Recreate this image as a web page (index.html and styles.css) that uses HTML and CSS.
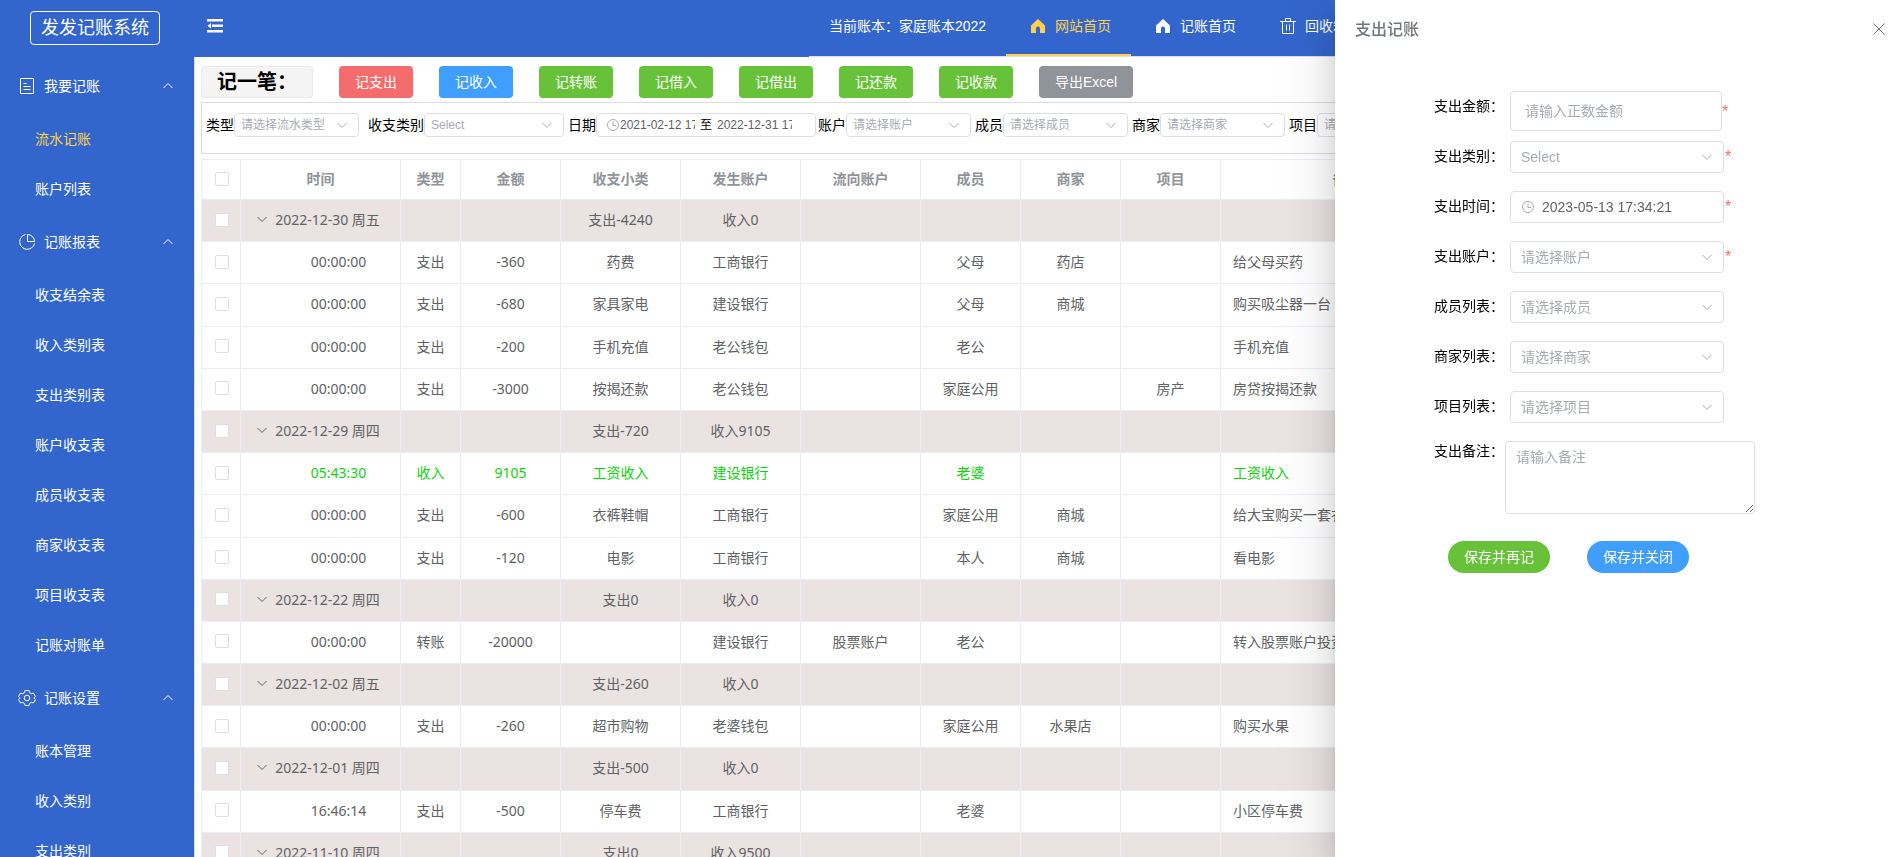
FILE: index.html
```
<!DOCTYPE html>
<html lang="zh-CN">

<head>
    <meta charset="UTF-8">
    <meta name="viewport" content="width=device-width, initial-scale=1.0">
    <title>发发记账系统</title>
    <link rel="stylesheet" href="styles.css">
</head>

<body>
    <svg class="symbols" aria-hidden="true">
        <symbol id="down" viewBox="0 0 14 14">
            <path d="M2.500 5l4.500 4.500 4.500-4.500" fill="none" stroke="currentColor" />
        </symbol>
        <symbol id="up" viewBox="0 0 14 14">
            <path d="M2.500 9l4.500-4.500 4.500 4.500" fill="none" stroke="currentColor" />
        </symbol>
        <symbol id="home" viewBox="0 0 18 18">
            <path d="M9 2L2 8.500V16h5v-4.500a2 2 0 0 1 4 0V16h5V8.500z" fill="currentColor" />
        </symbol>
        <symbol id="clock" viewBox="0 0 14 14">
            <circle cx="7" cy="7" r="5.500" fill="none" stroke="currentColor" />
            <path d="M7 3.500V7.500h3" fill="none" stroke="currentColor" />
        </symbol>
    </svg>
    <div class="layout">
        <aside class="sidebar">
            <div class="logo">发发记账系统</div>
            <nav>
                <button type="button" class="group">
                    <svg class="icon" viewBox="0 0 18 18" fill="none" stroke="currentColor">
                        <path d="M2.500 1.500h13v15h-13zM5.500 6.500h3M5.500 9.500h7M5.500 12.500h7" />
                    </svg>
                    <span>我要记账</span>
                    <svg class="arrow"><use href="#up" /></svg>
                </button>
                <a href="#" class="active">流水记账</a>
                <a href="#">账户列表</a>
                <button type="button" class="group">
                    <svg class="icon" viewBox="0 0 18 18" fill="none" stroke="currentColor">
                        <path d="M7.500 1.500A7.500 7.500 0 1 0 16.500 10.500M9.500 1.500V8.500H16.500A7 7 0 0 0 9.500 1.500z" />
                    </svg>
                    <span>记账报表</span>
                    <svg class="arrow"><use href="#up" /></svg>
                </button>
                <a href="#">收支结余表</a>
                <a href="#">收入类别表</a>
                <a href="#">支出类别表</a>
                <a href="#">账户收支表</a>
                <a href="#">成员收支表</a>
                <a href="#">商家收支表</a>
                <a href="#">项目收支表</a>
                <a href="#">记账对账单</a>
                <button type="button" class="group">
                    <svg class="icon" viewBox="0 0 18 18" fill="none" stroke="currentColor">
                        <path d="M7 1.500h4l.6 2.200 1.700 1 2.200-.6 2 3.400-1.600 1.500 1.600 1.600-2 3.400-2.200-.6-1.700 1-.6 2.100H7l-.6-2.100-1.700-1-2.200.6-2-3.400L2.100 9 .5 7.500l2-3.400 2.200.6 1.700-1z" />
                        <circle cx="9" cy="9" r="2.800" />
                    </svg>
                    <span>记账设置</span>
                    <svg class="arrow"><use href="#up" /></svg>
                </button>
                <a href="#">账本管理</a>
                <a href="#">收入类别</a>
                <a href="#">支出类别</a>
            </nav>
        </aside>
        <div class="content">
            <header>
                <button type="button" class="fold" aria-label="折叠菜单">
                    <svg viewBox="0 0 16 14" fill="currentColor">
                        <path d="M0 0h16v2.500H0zM5 5.500h11v2.500H5zM0 11h16v2.500H0zM4 4v5.500L0.500 6.750z" />
                    </svg>
                </button>
                <nav class="topnav">
                    <span class="book">当前账本：家庭账本2022</span>
                    <a href="#" class="current"><svg><use href="#home" /></svg>网站首页</a>
                    <a href="#"><svg><use href="#home" /></svg>记账首页</a>
                    <a href="#"><svg viewBox="0 0 18 18" fill="none" stroke="currentColor">
                            <path d="M1 4.500h16M6.500 4V1.500h5V4M3.500 4.500v12h11v-12M7.500 7.500v6M10.500 7.500v6" />
                        </svg>回收箱</a>
                </nav>
            </header>
            <main>
                <div class="actions">
                    <h1>记一笔：</h1>
                    <button type="button" class="btn danger">记支出</button>
                    <button type="button" class="btn primary">记收入</button>
                    <button type="button" class="btn success">记转账</button>
                    <button type="button" class="btn success">记借入</button>
                    <button type="button" class="btn success">记借出</button>
                    <button type="button" class="btn success">记还款</button>
                    <button type="button" class="btn success">记收款</button>
                    <button type="button" class="btn info">导出Excel</button>
                </div>
                <form class="filter">
                    <div class="item type">
                        <label for="f-type">类型</label>
                        <div class="select">
                            <select id="f-type"><option>请选择流水类型</option></select>
                            <svg><use href="#down" /></svg>
                        </div>
                    </div>
                    <div class="item category">
                        <label for="f-category">收支类别</label>
                        <div class="select">
                            <select id="f-category"><option>Select</option></select>
                            <svg><use href="#down" /></svg>
                        </div>
                    </div>
                    <div class="item period">
                        <label for="f-start">日期</label>
                        <div class="range">
                            <svg><use href="#clock" /></svg>
                            <input type="text" id="f-start" value="2021-02-12 17:34:21">
                            <span>至</span>
                            <input type="text" aria-label="结束日期" value="2022-12-31 17:34:21">
                        </div>
                    </div>
                    <div class="item">
                        <label for="f-account">账户</label>
                        <div class="select">
                            <select id="f-account"><option>请选择账户</option></select>
                            <svg><use href="#down" /></svg>
                        </div>
                    </div>
                    <div class="item">
                        <label for="f-member">成员</label>
                        <div class="select">
                            <select id="f-member"><option>请选择成员</option></select>
                            <svg><use href="#down" /></svg>
                        </div>
                    </div>
                    <div class="item">
                        <label for="f-shop">商家</label>
                        <div class="select">
                            <select id="f-shop"><option>请选择商家</option></select>
                            <svg><use href="#down" /></svg>
                        </div>
                    </div>
                    <div class="item">
                        <label for="f-project">项目</label>
                        <div class="select">
                            <select id="f-project"><option>请选择项目</option></select>
                            <svg><use href="#down" /></svg>
                        </div>
                    </div>
                </form>
                <table>
                    <colgroup>
                        <col class="w-check">
                        <col class="w-time">
                        <col class="w-type">
                        <col class="w-small">
                        <col class="w-large">
                        <col class="w-large">
                        <col class="w-large">
                        <col class="w-small">
                        <col class="w-small">
                        <col class="w-small">
                        <col class="w-remark">
                        <col>
                    </colgroup>
                    <thead>
                        <tr>
                            <th><input type="checkbox" aria-label="全选"></th>
                            <th>时间</th>
                            <th>类型</th>
                            <th>金额</th>
                            <th>收支小类</th>
                            <th>发生账户</th>
                            <th>流向账户</th>
                            <th>成员</th>
                            <th>商家</th>
                            <th>项目</th>
                            <th>备注</th>
                            <th></th>
                        </tr>
                    </thead>
                    <tbody></tbody>
                </table>
            </main>
        </div>
    </div>
    <div class="drawer" role="dialog" aria-labelledby="drawer-title">
        <div class="drawer-head">
            <h2 id="drawer-title">支出记账</h2>
            <button type="button" aria-label="关闭">
                <svg viewBox="0 0 12 12" fill="none" stroke="currentColor">
                    <path d="M0.500 0.500l11 11M11.500 0.500l-11 11" />
                </svg>
            </button>
        </div>
        <form class="bill">
            <div class="row amount">
                <label for="b-amount">支出金额：</label>
                <input type="text" id="b-amount" placeholder="请输入正数金额">
                <span class="star">*</span>
            </div>
            <div class="row">
                <label for="b-category">支出类别：</label>
                <div class="select">
                    <select id="b-category"><option>Select</option></select>
                    <svg><use href="#down" /></svg>
                </div>
                <span class="star">*</span>
            </div>
            <div class="row">
                <label for="b-time">支出时间：</label>
                <div class="time">
                    <svg><use href="#clock" /></svg>
                    <input type="text" id="b-time" value="2023-05-13 17:34:21">
                </div>
                <span class="star">*</span>
            </div>
            <div class="row">
                <label for="b-account">支出账户：</label>
                <div class="select">
                    <select id="b-account"><option>请选择账户</option></select>
                    <svg><use href="#down" /></svg>
                </div>
                <span class="star">*</span>
            </div>
            <div class="row">
                <label for="b-member">成员列表：</label>
                <div class="select">
                    <select id="b-member"><option>请选择成员</option></select>
                    <svg><use href="#down" /></svg>
                </div>
            </div>
            <div class="row">
                <label for="b-shop">商家列表：</label>
                <div class="select">
                    <select id="b-shop"><option>请选择商家</option></select>
                    <svg><use href="#down" /></svg>
                </div>
            </div>
            <div class="row">
                <label for="b-project">项目列表：</label>
                <div class="select">
                    <select id="b-project"><option>请选择项目</option></select>
                    <svg><use href="#down" /></svg>
                </div>
            </div>
            <div class="row remark">
                <label for="b-remark">支出备注：</label>
                <textarea id="b-remark" placeholder="请输入备注"></textarea>
            </div>
            <div class="submit">
                <button type="button" class="btn success round">保存并再记</button>
                <button type="button" class="btn primary round">保存并关闭</button>
            </div>
        </form>
    </div>
    <script src="table.js"></script>
</body>

</html>
```

FILE: styles.css
```
* {
    box-sizing: border-box;
}

body {
    margin: 0;
    height: 100vh;
    overflow: hidden;
    background-color: #fff;
    color: #000;
    font-family: "Liberation Sans", "Noto Sans CJK SC", sans-serif;
    font-size: 14px;
}

button,
input,
select,
textarea {
    margin: 0;
    font-family: inherit;
    font-size: inherit;
}

button {
    cursor: pointer;
}

a {
    text-decoration: none;
}

svg {
    flex-shrink: 0;
}

.symbols {
    display: none;
}

.layout {
    display: flex;
    height: 100vh;
}

/* 左侧菜单 */
.sidebar {
    flex: 0 0 194px;
    overflow: hidden;
    background-color: #3366cc;
    color: #fff;
}

.logo {
    width: 130px;
    height: 34px;
    margin: 11px 0 13px 30px;
    border: 1px solid #fff;
    border-radius: 4px;
    font-size: 18px;
    line-height: 32px;
    text-align: center;
}

.sidebar a {
    display: block;
    height: 50px;
    padding-left: 35px;
    line-height: 50px;
    color: #fff;
}

.sidebar .active {
    color: #ffd04b;
}

.group {
    display: flex;
    align-items: center;
    width: 100%;
    height: 56px;
    padding: 0 19px 0 18px;
    border: none;
    background: none;
    color: #fff;
}

.group span {
    padding-bottom: 2px;
}

.icon {
    width: 18px;
    height: 18px;
    margin-right: 8px;
}

.arrow {
    width: 14px;
    height: 14px;
    margin-left: auto;
}

/* 顶部 */
.content {
    display: flex;
    flex-direction: column;
    flex: 1;
    min-width: 0;
}

header {
    display: grid;
    grid-template-columns: 615px 1fr;
    flex: 0 0 57px;
    background-color: #3366cc;
    color: #fff;
}

.fold {
    width: 42px;
    height: 52px;
    padding: 0 13px;
    border: none;
    background: none;
    color: #fff;
}

.fold svg {
    display: block;
    width: 16px;
    height: 14px;
}

.topnav {
    display: flex;
    border-bottom: 1px solid #dcdfe6;
    line-height: 52px;
    white-space: nowrap;
}

.topnav .book {
    width: 197px;
    padding-left: 20px;
}

.topnav a {
    display: flex;
    align-items: center;
    height: 56px;
    padding: 0 20px 2px;
    border-bottom: 2px solid transparent;
    color: #fff;
}

.topnav .current {
    border-bottom-color: #ffd04b;
    color: #ffd04b;
}

.topnav svg {
    width: 18px;
    height: 18px;
    margin: 0 8px 0 3px;
}

/* 记账按钮 */
main {
    flex: 1;
    min-height: 0;
    padding: 9px 6px 0;
    border-left: 1px solid #dcdfe6;
    overflow: hidden;
}

.actions {
    display: flex;
    gap: 26px;
}

h1 {
    width: 112px;
    height: 32px;
    margin: 0;
    padding-left: 15px;
    border: 1px solid #e9e9eb;
    border-radius: 4px;
    background-color: #f4f4f5;
    font-size: 20px;
    line-height: 30px;
    white-space: nowrap;
}

.btn {
    height: 32px;
    padding: 0 16px 2px;
    border: none;
    border-radius: 4px;
    color: #fff;
    white-space: nowrap;
}

.danger {
    background-color: #f56c6c;
}

.primary {
    background-color: #409eff;
}

.success {
    background-color: #67c23a;
}

.info {
    background-color: #909399;
}

.round {
    border-radius: 16px;
}

/* 查询条件 */
.filter {
    display: flex;
    align-items: flex-start;
    gap: 4px;
    height: 52px;
    margin: 4px 0 5px;
    padding: 10px 4px;
    border: 1px solid #dcdcdc;
    overflow: hidden;
}

.item {
    display: flex;
    flex-shrink: 0;
    height: 24px;
    line-height: 24px;
}

.item .select {
    width: 125px;
}

.item.type {
    margin-right: 5px;
}

.item.category .select {
    width: 140px;
}

.item.period {
    margin-right: -2px;
}

.select {
    position: relative;
}

select {
    appearance: none;
    width: 100%;
    height: 32px;
    padding: 0 30px 0 10px;
    border: 1px solid #dcdfe6;
    border-radius: 4px;
    background-color: #fff;
    color: #a8abb2;
}

/* 下拉箭头 */
.select svg {
    position: absolute;
    top: 50%;
    right: 10px;
    width: 14px;
    height: 14px;
    margin-top: -7px;
    color: #a8abb2;
    pointer-events: none;
}

.filter select {
    display: block;
    height: 24px;
    padding-left: 6px;
    font-size: 12px;
}

.range {
    display: flex;
    align-items: center;
    width: 220px;
    height: 24px;
    padding-left: 9px;
    border: 1px solid #dcdfe6;
    border-radius: 4px;
    font-size: 12px;
}

.range svg,
.time svg {
    width: 14px;
    height: 14px;
    color: #a8abb2;
}

.range input {
    width: 75px;
    padding: 0;
    border: none;
    color: #606266;
}

.range span {
    width: 22px;
    text-align: center;
}

/* 流水表格 */
table {
    width: 100%;
    table-layout: fixed;
    border-collapse: collapse;
    color: #606266;
    font-family: "Noto Sans", "Noto Sans CJK SC", sans-serif;
}

th,
td {
    padding: 7px 0 9px;
    border: 1px solid #ebeef5;
    line-height: 1.8;
    text-align: center;
    white-space: nowrap;
    overflow: hidden;
}

th {
    color: #909399;
    line-height: 23px;
}

.w-check {
    width: 39px;
}

.w-time {
    width: 160px;
}

.w-type {
    width: 60px;
}

.w-small {
    width: 100px;
}

.w-large {
    width: 120px;
}

.w-remark {
    width: 252px;
}

table input {
    appearance: none;
    display: block;
    width: 14px;
    height: 14px;
    margin: 0 0 0 13px;
    border: 1px solid #dcdfe6;
    border-radius: 2px;
    background-color: #fff;
}

.day {
    background-color: #ebe2e2;
}

.income {
    color: #13ce13;
}

.note {
    padding-left: 12px;
    text-align: left;
}

.clock {
    padding-left: 36px;
}

.date {
    padding-right: 6px;
}

.toggle {
    width: 20px;
    height: 14px;
    padding: 0 6px 0 0;
    border: none;
    background: none;
    color: #606266;
    vertical-align: -1px;
}

.toggle svg {
    display: block;
    width: 14px;
    height: 14px;
}

/* 右侧抽屉 */
.drawer {
    position: fixed;
    top: 0;
    right: 0;
    bottom: 0;
    width: 555px;
    background-color: #fff;
    box-shadow: 0 16px 48px 16px rgba(0, 0, 0, .08), 0 12px 32px rgba(0, 0, 0, .12), 0 8px 16px -8px rgba(0, 0, 0, .16);
}

.drawer-head {
    display: flex;
    align-items: center;
    justify-content: space-between;
    height: 58px;
    padding: 0 5px 0 20px;
    color: #72767b;
}

h2 {
    margin: 0;
    padding-bottom: 2px;
    font-size: 16px;
    font-weight: 500;
}

.drawer-head button {
    padding: 0;
    border: none;
    background: none;
    color: inherit;
}

.drawer-head svg {
    display: block;
    width: 12px;
    height: 12px;
}

.bill {
    padding: 33px 0 0 99px;
}

.row {
    display: flex;
    align-items: center;
    height: 50px;
}

.row label {
    width: 76px;
    padding-bottom: 4px;
    white-space: nowrap;
}

.row .select,
.time {
    width: 214px;
}

.star {
    align-self: flex-start;
    padding: 16px 0 0 1px;
    color: #f56c6c;
    font-size: 16px;
}

.row.amount {
    align-items: flex-start;
    height: 41px;
}

.amount label {
    line-height: 30px;
}

.amount .star {
    padding-top: 12px;
    padding-left: 0;
}

.amount input {
    width: 212px;
    height: 40px;
    padding: 0 14px;
    border: 1px solid #dcdfe6;
    border-radius: 4px;
}

::placeholder {
    color: #a8abb2;
}

.time {
    display: flex;
    align-items: center;
    gap: 7px;
    height: 32px;
    padding: 0 10px;
    border: 1px solid #dcdfe6;
    border-radius: 4px;
}

.time input {
    width: 100%;
    padding: 0;
    border: none;
    color: #606266;
}

.row.remark {
    align-items: flex-start;
    height: auto;
    padding-top: 9px;
}

.remark label {
    width: 71px;
    line-height: 20px;
}

textarea {
    width: 250px;
    height: 73px;
    padding: 4px 10px;
    border: 1px solid #dcdfe6;
    border-radius: 4px;
}

.submit {
    display: flex;
    gap: 37px;
    padding: 27px 0 0 14px;
}
```

FILE: table.js
```
// day: [日期, 支出, 收入], 明细: [时间, 类型, 金额, 小类, 发生账户, 流向账户, 成员, 商家, 项目, 备注]
const days = [
    {
        day: ['2022-12-30 周五', '支出-4240', '收入0'],
        list: [
            ['00:00:00', '支出', '-360', '药费', '工商银行', '', '父母', '药店', '', '给父母买药'],
            ['00:00:00', '支出', '-680', '家具家电', '建设银行', '', '父母', '商城', '', '购买吸尘器一台'],
            ['00:00:00', '支出', '-200', '手机充值', '老公钱包', '', '老公', '', '', '手机充值'],
            ['00:00:00', '支出', '-3000', '按揭还款', '老公钱包', '', '家庭公用', '', '房产', '房贷按揭还款']
        ]
    },
    {
        day: ['2022-12-29 周四', '支出-720', '收入9105'],
        list: [
            ['05:43:30', '收入', '9105', '工资收入', '建设银行', '', '老婆', '', '', '工资收入'],
            ['00:00:00', '支出', '-600', '衣裤鞋帽', '工商银行', '', '家庭公用', '商城', '', '给大宝购买一套衣服'],
            ['00:00:00', '支出', '-120', '电影', '工商银行', '', '本人', '商城', '', '看电影']
        ]
    },
    {
        day: ['2022-12-22 周四', '支出0', '收入0'],
        list: [
            ['00:00:00', '转账', '-20000', '', '建设银行', '股票账户', '老公', '', '', '转入股票账户投资']
        ]
    },
    {
        day: ['2022-12-02 周五', '支出-260', '收入0'],
        list: [
            ['00:00:00', '支出', '-260', '超市购物', '老婆钱包', '', '家庭公用', '水果店', '', '购买水果']
        ]
    },
    {
        day: ['2022-12-01 周四', '支出-500', '收入0'],
        list: [
            ['16:46:14', '支出', '-500', '停车费', '工商银行', '', '老婆', '', '', '小区停车费']
        ]
    },
    {
        day: ['2022-11-10 周四', '支出0', '收入9500'],
        list: []
    }
];

const tbody = document.querySelector('tbody');
const toggle = '<button type="button" class="toggle" aria-label="展开"><svg><use href="#down" /></svg></button>';

function addRow(cells, className) {
    const tr = document.createElement('tr');
    tr.className = className;
    tr.innerHTML = '<td><input type="checkbox" aria-label="选择"></td>' + cells.join('') + '<td></td>';
    tbody.append(tr);
}

days.forEach(function (item) {
    const [date, out, income] = item.day;
    addRow([
        `<td class="date">${toggle}${date}</td>`, '<td></td>', '<td></td>', `<td>${out}</td>`, `<td>${income}</td>`,
        '<td></td>', '<td></td>', '<td></td>', '<td></td>', '<td></td>'
    ], 'day');
    item.list.forEach(function (bill) {
        const cells = bill.map(function (text, i) {
            const name = i == 0 ? 'clock' : i == 9 ? 'note' : '';
            return `<td class="${name}">${text}</td>`;
        });
        addRow(cells, bill[1] == '收入' ? 'income' : '');
    });
});
```
